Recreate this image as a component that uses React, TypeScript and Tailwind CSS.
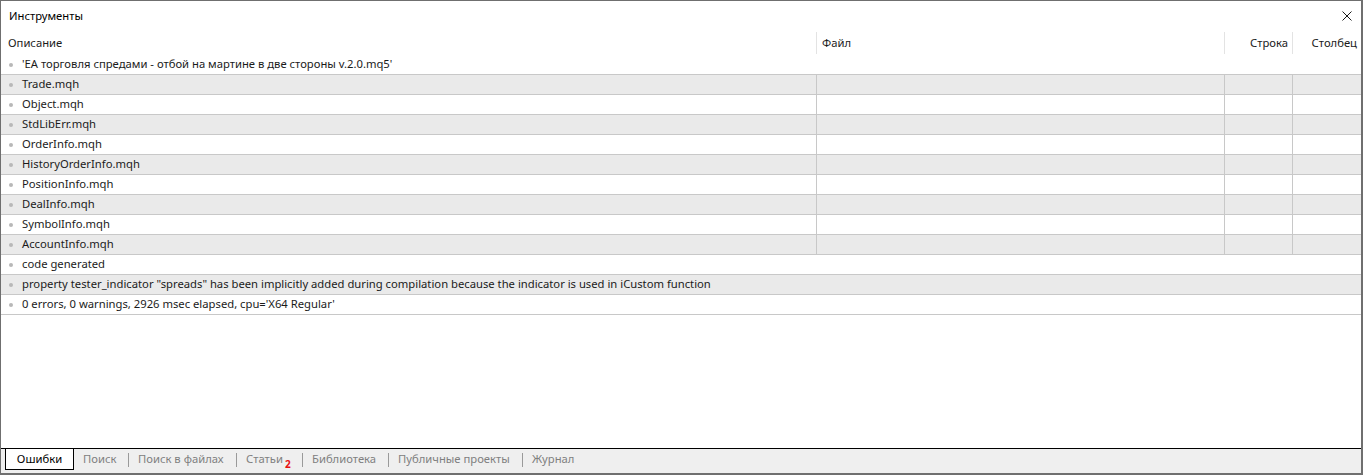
import React from 'react';

const rows: { text: string; cols: boolean }[] = [
  { text: "'EA торговля спредами - отбой на мартине в две стороны v.2.0.mq5'", cols: false },
  { text: 'Trade.mqh', cols: true },
  { text: 'Object.mqh', cols: true },
  { text: 'StdLibErr.mqh', cols: true },
  { text: 'OrderInfo.mqh', cols: true },
  { text: 'HistoryOrderInfo.mqh', cols: true },
  { text: 'PositionInfo.mqh', cols: true },
  { text: 'DealInfo.mqh', cols: true },
  { text: 'SymbolInfo.mqh', cols: true },
  { text: 'AccountInfo.mqh', cols: true },
  { text: 'code generated', cols: false },
  {
    text: 'property tester_indicator "spreads" has been implicitly added during compilation because the indicator is used in iCustom function',
    cols: false,
  },
  { text: "0 errors, 0 warnings, 2926 msec elapsed, cpu='X64 Regular'", cols: false },
];

const tabs = [
  { label: 'Поиск', w: 'w-[54px]' },
  { label: 'Поиск в файлах', w: 'w-[107px]' },
  { label: 'Статьи', w: 'w-[65px]', badge: '2' },
  { label: 'Библиотека', w: 'w-[85px]' },
  { label: 'Публичные проекты', w: 'w-[133px]' },
  { label: 'Журнал', w: 'w-[80px]' },
];

function Sep() {
  return <span className="w-px h-[14px] mt-[4px] bg-[#9a9a9a] shrink-0" />;
}

export default function App() {
  return (
    <div
      className="w-[1363px] h-[475px] flex flex-col bg-white border-l border-t border-r-2 border-b-2 border-[#6f6f6f] text-[11.25px] text-[#1b1b1b] overflow-hidden"
      style={{ fontFamily: '"Noto Sans", "Open Sans", sans-serif' }}
    >
      {/* Title bar */}
      <div className="h-[30px] shrink-0 flex items-center justify-between pl-[8px] pr-[9px]">
        <span className="text-black">Инструменты</span>
        <svg width="10" height="10" viewBox="0 0 10 10" className="text-[#1a1a1a]">
          <path d="M0.5 0.5L9.5 9.5M9.5 0.5L0.5 9.5" stroke="currentColor" strokeWidth="1" />
        </svg>
      </div>

      {/* Column header */}
      <div className="h-[24px] shrink-0 flex">
        <div className="w-[816px] shrink-0 flex items-center pl-[7px] border-r border-[#e3e3e3] my-[1px]">Описание</div>
        <div className="w-[408px] shrink-0 flex items-center pl-[5px] border-r border-[#e3e3e3] my-[1px]">Файл</div>
        <div className="w-[68px] shrink-0 flex items-center justify-end pr-[4px] border-r border-[#e3e3e3] my-[1px]">Строка</div>
        <div className="flex-1 flex items-center justify-end pr-[4px]">Столбец</div>
      </div>

      {/* Rows */}
      <div className="shrink-0 flex flex-col">
        {rows.map((r, i) => (
          <div
            key={i}
            className={`h-[20px] flex border-b border-[#c8c8c8] ${i % 2 === 1 ? 'bg-[#eaeaea]' : 'bg-white'}`}
          >
            <div className={`flex items-center pl-[8px] ${r.cols ? 'w-[816px] shrink-0 border-r border-[#c8c8c8]' : 'flex-1'}`}>
              <span className="w-[4px] h-[4px] rounded-full bg-[#b8b8b8] shrink-0" />
              <span className="ml-[9px] whitespace-nowrap">{r.text}</span>
            </div>
            {r.cols && (
              <>
                <div className="w-[408px] shrink-0 border-r border-[#c8c8c8]" />
                <div className="w-[68px] shrink-0 border-r border-[#c8c8c8]" />
                <div className="flex-1" />
              </>
            )}
          </div>
        ))}
      </div>

      <div className="flex-1" />

      {/* Bottom tabs */}
      <div className="h-[25px] shrink-0 flex items-start border-t border-black bg-[#efefef] pl-[4px]">
        <div className="w-[69px] h-[21px] shrink-0 flex items-center justify-center bg-white border-l border-r border-b border-black text-black">
          Ошибки
        </div>
        {tabs.map((t, i) => (
          <React.Fragment key={t.label}>
            {i > 0 && <Sep />}
            <div className={`${t.w} h-[21px] shrink-0 flex items-center pl-[9px] text-[#808080] whitespace-nowrap`}>
              {t.label}
              {t.badge && <span className="ml-[2px] mt-[8px] text-[10px] font-bold text-[#e81010] leading-none">{t.badge}</span>}
            </div>
          </React.Fragment>
        ))}
      </div>
    </div>
  );
}
